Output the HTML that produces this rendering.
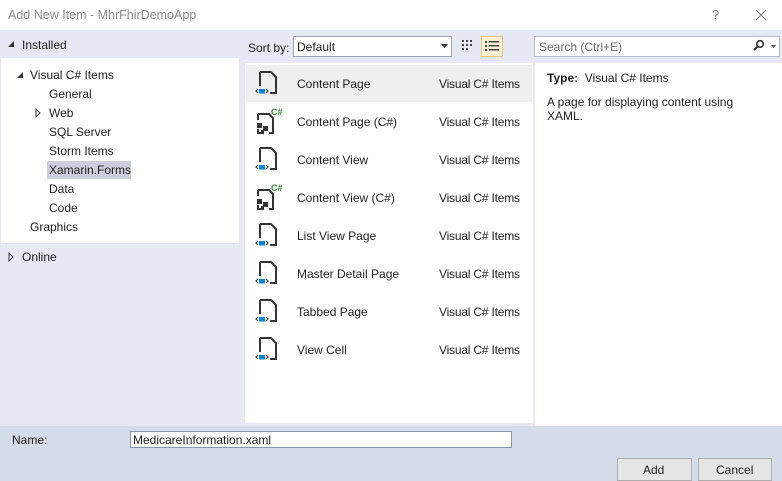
<!DOCTYPE html>
<html><head><style>
*{margin:0;padding:0;box-sizing:border-box}
body{width:782px;height:481px;position:relative;background:#e6e9f4;font-family:"Liberation Sans",sans-serif;font-size:12px;color:#1e1e1e;overflow:hidden}
.a{position:absolute;white-space:nowrap}
.t{position:absolute;font-size:12px;white-space:nowrap}
</style></head><body>
<div class="a" style="left:0;top:0;width:782px;height:30px;background:#fff"></div>
<div class="a" style="left:8px;top:8px;color:#8a8a8a;font-size:12.5px">Add New Item - MhrFhirDemoApp</div>
<div class="a" style="left:712px;top:7px;color:#888;font-size:13px">?</div>
<svg class="a" style="left:755px;top:9px" width="12" height="12"><path d="M1 1L11 11M11 1L1 11" stroke="#888" stroke-width="1.2"/></svg>

<svg class="a" style="left:7px;top:40px" width="8" height="8"><path d="M7 1V7H1Z" fill="#333"/></svg>
<div class="t" style="left:22px;top:38px">Installed</div>
<div class="a" style="left:1px;top:58px;width:238px;height:185px;background:#fff"></div>
<svg class="a" style="left:16px;top:71px" width="8" height="8"><path d="M7 1V7H1Z" fill="#333"/></svg>
<div class="t" style="left:30px;top:68px">Visual C# Items</div>
<div class="t" style="left:49px;top:87px">General</div>
<svg class="a" style="left:35px;top:108px" width="6" height="10"><path d="M1 1L5 5L1 9Z" fill="none" stroke="#333"/></svg>
<div class="t" style="left:49px;top:106px">Web</div>
<div class="t" style="left:49px;top:125px">SQL Server</div>
<div class="t" style="left:49px;top:144px">Storm Items</div>
<div class="a" style="left:47px;top:161px;width:84px;height:18px;background:#cccedb"></div>
<div class="t" style="left:49px;top:163px">Xamarin.Forms</div>
<div class="t" style="left:49px;top:182px">Data</div>
<div class="t" style="left:49px;top:201px">Code</div>
<div class="t" style="left:30px;top:220px">Graphics</div>
<svg class="a" style="left:8px;top:252px" width="6" height="10"><path d="M1 1L5 5L1 9Z" fill="none" stroke="#333"/></svg>
<div class="t" style="left:22px;top:250px">Online</div>

<div class="t" style="left:248px;top:41px">Sort by:</div>
<div class="a" style="left:293px;top:36px;width:159px;height:21px;background:#fff;border:1px solid #a0a4b0"></div>
<div class="t" style="left:297px;top:40px">Default</div>
<svg class="a" style="left:441px;top:44px" width="7" height="4"><path d="M0 0H7L3.5 4Z" fill="#333"/></svg>
<svg class="a" style="left:461px;top:39px" width="14" height="14"><g fill="#444"><rect x="1" y="1" width="2" height="2"/><rect x="5" y="1" width="2" height="2"/><rect x="9" y="1" width="2" height="2"/><rect x="1" y="5" width="2" height="2"/><rect x="5" y="5" width="2" height="2"/><rect x="9" y="5" width="2" height="2"/><rect x="1" y="9" width="2" height="2"/><rect x="5" y="9" width="2" height="2"/></g></svg>
<div class="a" style="left:481px;top:36px;width:22px;height:21px;background:#fdf0d4;border:1px solid #e8c37a"></div>
<svg class="a" style="left:485px;top:40px" width="14" height="14"><g fill="#444"><rect x="0" y="1" width="2" height="2"/><rect x="4" y="1" width="10" height="1.5"/><rect x="0" y="5" width="2" height="2"/><rect x="4" y="5" width="10" height="1.5"/><rect x="0" y="9" width="2" height="2"/><rect x="4" y="9" width="10" height="1.5"/></g></svg>
<div class="a" style="left:534px;top:36px;width:246px;height:21px;background:#fff;border:1px solid #b8bccb"></div>
<div class="t" style="left:539px;top:40px;color:#6d6d6d">Search (Ctrl+E)</div>
<svg class="a" style="left:752px;top:39px" width="28" height="14"><circle cx="8" cy="5" r="3.3" fill="none" stroke="#333" stroke-width="1.6"/><path d="M5.5 7.5L2 11" stroke="#333" stroke-width="2"/><path d="M19 6H24L21.5 9Z" fill="#555"/></svg>

<div class="a" style="left:245px;top:63px;width:288px;height:360px;background:#fff"></div>
<div class="a" style="left:246px;top:65px;width:286px;height:37px;background:#efeff1"></div>
<div id="list"></div>
<div class="a" style="left:534px;top:63px;width:248px;height:363px;background:#fff;border-left:1px solid #e6e8ee"></div>
<div class="t" style="left:547px;top:71px"><b>Type:</b>&nbsp; Visual C# Items</div>
<div class="t" style="left:547px;top:95px;line-height:14px">A page for displaying content using<br>XAML.</div>

<div class="a" style="left:0;top:426px;width:782px;height:55px;background:#d6dbe9"></div>
<div class="t" style="left:12px;top:433px">Name:</div>
<div class="a" style="left:130px;top:431px;width:382px;height:17px;background:#fff;border:1px solid #8f95a5"></div>
<div class="t" style="left:133px;top:433px">MedicareInformation.xaml</div>
<div class="a" style="left:617px;top:458px;width:75px;height:23px;background:#e5e5e5;border:1px solid #acacac"></div>
<div class="t" style="left:643px;top:463px">Add</div>
<div class="a" style="left:698px;top:458px;width:74px;height:23px;background:#e5e5e5;border:1px solid #acacac"></div>
<div class="t" style="left:716px;top:463px">Cancel</div>

<script>
var items=[["Content Page",0],["Content Page (C#)",1],["Content View",0],["Content View (C#)",1],["List View Page",0],["Master Detail Page",0],["Tabbed Page",0],["View Cell",0]];
var h="";
items.forEach(function(it,i){var y=65+i*38;
if(it[1]){h+='<svg class="a" style="left:252px;top:'+(y+3)+'px" width="34" height="32"><path d="M6 8H17L21 12V27H17M6 8V14M6 23V27H9" fill="none" stroke="#333" stroke-width="2"/><text x="19" y="9" font-size="9" font-weight="bold" fill="#388a34" font-family="Liberation Sans">C#</text><g fill="#333"><rect x="5" y="17" width="5" height="5"/><rect x="11" y="20" width="5" height="5"/><rect x="9" y="24" width="3" height="4"/></g></svg>';}
else{h+='<svg class="a" style="left:252px;top:'+(y+3)+'px" width="34" height="32"><path d="M8 4H19L24 9V25H18M8 4V18" fill="none" stroke="#333" stroke-width="2"/><path d="M6 21L4 23L6 25M14 21L16 23L14 25" fill="none" stroke="#333" stroke-width="1.2"/><rect x="7" y="21" width="6" height="4.5" fill="#0a84d6"/></svg>';}
h+='<div class="t" style="left:297px;top:'+(y+12)+'px">'+it[0]+'</div><div class="t" style="left:439px;top:'+(y+12)+'px;letter-spacing:-0.2px">Visual C# Items</div>';});
document.getElementById("list").innerHTML=h;
</script>
</body></html>
